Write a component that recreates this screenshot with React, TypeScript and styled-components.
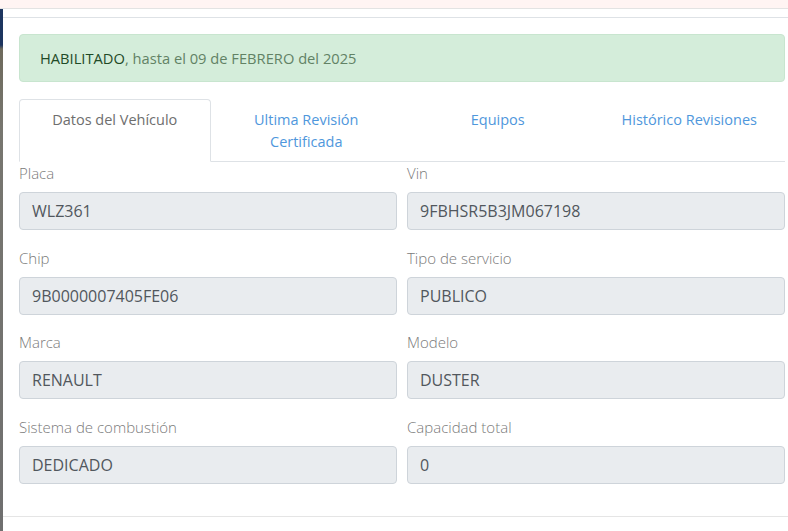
import React from "react";
import styled, { createGlobalStyle } from "styled-components";

const Global = createGlobalStyle`
  html, body { margin: 0; padding: 0; background: #ffffff; }
  body { font-family: "Open Sans", "Noto Sans", sans-serif; overflow: hidden; }
  * { box-sizing: border-box; }
`;

const Page = styled.div`
  width: 788px;
  height: 531px;
  display: flex;
  flex-direction: column;
  overflow: hidden;
`;

const TopStrip = styled.div`
  height: 9px;
  flex: none;
  background: #fff4f3;
  border-bottom: 1px solid #e3e3e3;
`;

const Stage = styled.div`
  flex: 1;
  display: flex;
  min-height: 0;
`;

const Backdrop = styled.div`
  width: 3px;
  flex: none;
  background: linear-gradient(
    to bottom,
    #1d355f 0px,
    #1d355f 36px,
    #6e6a5c 40px,
    #77766f 120px,
    #6f6f6f 100%
  );
`;

const Modal = styled.div`
  width: 798px;
  flex: none;
  background: #fff;
  display: flex;
  flex-direction: column;
`;

const ModalHeader = styled.div`
  height: 9px;
  flex: none;
  border-bottom: 1px solid #dee2e6;
`;

const ModalBody = styled.div`
  padding: 16px 16px 15.5px;
`;

const ModalFooter = styled.div`
  border-top: 1px solid #e5e5e5;
  height: 20px;
`;

const Alert = styled.div`
  background: #d4edda;
  border: 1px solid #c8e5cf;
  border-radius: 4px;
  padding: 12px 20px;
  font-size: 14.7px;
  line-height: 22px;
  color: #628265;
`;

const Strong = styled.span`
  color: #1f4a27;
  font-weight: 500;
`;

const Tabs = styled.div`
  margin-top: 17px;
  display: flex;
  border-bottom: 1px solid #dee2e6;
`;

const Tab = styled.div<{ $active?: boolean }>`
  flex: 1;
  text-align: center;
  font-size: 14.5px;
  line-height: 22px;
  padding: 9px 12px 8px;
  margin-bottom: -1px;
  border: 1px solid ${(p) => (p.$active ? "#dee2e6" : "transparent")};
  border-bottom-color: ${(p) => (p.$active ? "#fff" : "transparent")};
  border-radius: 4px 4px 0 0;
  background: ${(p) => (p.$active ? "#fff" : "transparent")};
  color: ${(p) => (p.$active ? "#6e6e6e" : "#4f97dc")};
`;

const Grid = styled.div`
  display: grid;
  grid-template-columns: 1fr 1fr;
  column-gap: 10px;
`;

const Group = styled.div`
  margin-bottom: 16.5px;
`;

const Label = styled.div`
  font-size: 15px;
  line-height: 22px;
  color: #7a7a7a;
  font-weight: 300;
  margin-bottom: 8px;
`;

const Input = styled.div`
  height: 38px;
  background: #e9ecef;
  border: 1px solid #ced4da;
  border-radius: 4px;
  padding: 0 12px;
  display: flex;
  align-items: center;
  font-size: 16px;
  color: #51575d;
`;

const fields: [string, string][] = [
  ["Placa", "WLZ361"],
  ["Vin", "9FBHSR5B3JM067198"],
  ["Chip", "9B0000007405FE06"],
  ["Tipo de servicio", "PUBLICO"],
  ["Marca", "RENAULT"],
  ["Modelo", "DUSTER"],
  ["Sistema de combustión", "DEDICADO"],
  ["Capacidad total", "0"],
];

const tabs = ["Datos del Vehículo", "Ultima Revisión Certificada", "Equipos", "Histórico Revisiones"];

export default function App() {
  return (
    <>
      <Global />
      <Page>
        <TopStrip />
        <Stage>
          <Backdrop />
          <Modal>
            <ModalHeader />
            <ModalBody>
              <Alert>
                <Strong>HABILITADO</Strong>, hasta el 09 de FEBRERO del 2025
              </Alert>
              <Tabs>
                {tabs.map((t, i) => (
                  <Tab key={t} $active={i === 0}>
                    {t}
                  </Tab>
                ))}
              </Tabs>
              <Grid>
                {fields.map(([l, v]) => (
                  <Group key={l}>
                    <Label>{l}</Label>
                    <Input>{v}</Input>
                  </Group>
                ))}
              </Grid>
            </ModalBody>
            <ModalFooter />
          </Modal>
        </Stage>
      </Page>
    </>
  );
}
